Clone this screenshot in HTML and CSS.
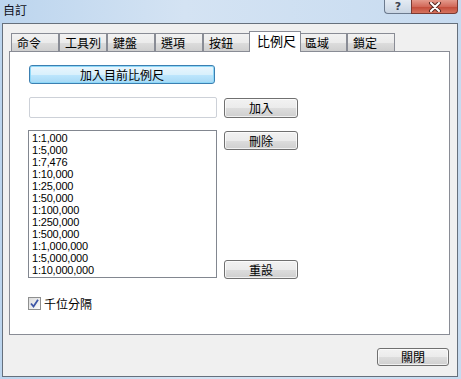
FILE: index.html
```html
<!DOCTYPE html>
<html lang="zh-Hant">
<head>
    <meta charset="UTF-8">
    <title>自訂</title>
    <link rel="stylesheet" href="styles.css">
</head>
<body>
    <div class="window">
        <div class="titlebar">
            <span class="title">自訂</span>
            <div class="caption-buttons">
                <span class="cap help">?</span>
                <span class="cap close">
                    <svg width="14" height="10" viewBox="0 0 14 10">
                        <path d="M3 1 L11 9 M11 1 L3 9" stroke="#5a2a24" stroke-width="4" stroke-linecap="round"/>
                        <path d="M3 1 L11 9 M11 1 L3 9" stroke="#ffffff" stroke-width="2" stroke-linecap="round"/>
                    </svg>
                </span>
            </div>
        </div>

        <div class="client">
            <div class="tabs">
                <span class="tab">命令</span>
                <span class="tab">工具列</span>
                <span class="tab">鍵盤</span>
                <span class="tab">選項</span>
                <span class="tab">按鈕</span>
                <span class="tab active">比例尺</span>
                <span class="tab">區域</span>
                <span class="tab">鎖定</span>
            </div>

            <div class="panel">
                <button class="btn btn-default btn-wide">加入目前比例尺</button>

                <div class="input-row">
                    <input type="text" class="text-input">
                    <button class="btn btn-side btn-add">加入</button>
                </div>

                <div class="list-row">
                    <div class="listbox">
                        <div>1:1,000</div>
                        <div>1:5,000</div>
                        <div>1:7,476</div>
                        <div>1:10,000</div>
                        <div>1:25,000</div>
                        <div>1:50,000</div>
                        <div>1:100,000</div>
                        <div>1:250,000</div>
                        <div>1:500,000</div>
                        <div>1:1,000,000</div>
                        <div>1:5,000,000</div>
                        <div>1:10,000,000</div>
                    </div>
                    <div class="list-buttons">
                        <button class="btn btn-side">刪除</button>
                        <button class="btn btn-side btn-reset">重設</button>
                    </div>
                </div>

                <label class="check">
                    <span class="check-box">
                        <svg width="9" height="9" viewBox="0 0 9 9">
                            <path d="M1 4.5 L3.5 7.5 L8 0.8" fill="none" stroke="#3d56a6" stroke-width="1.8"/>
                        </svg>
                    </span>
                    千位分隔
                </label>
            </div>

            <div class="footer">
                <button class="btn btn-close">關閉</button>
            </div>
        </div>
    </div>
</body>
</html>
```

FILE: styles.css
```css
body {
    margin: 0;
    font-family: "Noto Sans CJK TC", "Liberation Sans", sans-serif;
    font-size: 12px;
    color: #000;
}
.window {
    width: 461px;
    height: 379px;
    box-sizing: border-box;
    padding: 0 3px 2px 2px;
    background: linear-gradient(to right, #bcd5ee, #d4e3f3 40%, #c7dbf0);
}
.titlebar {
    height: 23px;
    display: flex;
    justify-content: space-between;
    align-items: flex-start;
}
.title {
    margin: 3px 0 0 1px;
    font-size: 12px;
    line-height: 14px;
    color: #101020;
}
.caption-buttons {
    display: flex;
    margin-right: 0;
}
.cap {
    height: 14px;
    box-sizing: border-box;
    display: flex;
    align-items: center;
    justify-content: center;
    border: 1px solid #6b7a8e;
    border-top: none;
}
.help {
    width: 27px;
    border-right: none;
    border-radius: 0 0 0 4px;
    background: linear-gradient(#e4ebf3, #c9d5e3);
    color: #3c4250;
    font-family: "DejaVu Sans", sans-serif;
    font-size: 11px;
    font-weight: bold;
    line-height: 12px;
}
.close {
    width: 47px;
    border-color: #7a3a32;
    border-radius: 0 0 4px 0;
    background: linear-gradient(#e49a8c, #d26a5a 50%, #c24a38 51%, #d5725e);
}
.client {
    height: 354px;
    box-sizing: border-box;
    border: 1px solid #66707c;
    background: #f0f0f0;
    display: flex;
    flex-direction: column;
}
.tabs {
    display: flex;
    align-items: flex-end;
    height: 20px;
    margin: 7px 0 0 8px;
    position: relative;
    z-index: 1;
}
.tab {
    width: 48px;
    height: 18px;
    box-sizing: border-box;
    border: 1px solid #898c95;
    border-bottom: none;
    padding: 1px 0 0 5px;
    line-height: 15px;
    background: linear-gradient(#f2f2f2, #ebebeb 50%, #dddddd 51%, #cfcfcf);
}
.tab + .tab {
    margin-left: 0;
}
.tab.active {
    width: 52px;
    height: 21px;
    margin: 0 -2px -1px -2px;
    padding: 0 0 0 7px;
    background: #fff;
    position: relative;
    z-index: 2;
    font-size: 13px;
    line-height: 17px;
}
.panel {
    margin: 0 7px 0 6px;
    height: 284px;
    box-sizing: border-box;
    border: 1px solid #898c95;
    background: #fff;
    padding: 13px 0 0 18px;
    display: flex;
    flex-direction: column;
    align-items: flex-start;
}
.btn {
    font-family: "Noto Sans CJK TC", "Liberation Sans", sans-serif;
    font-size: 12px;
    line-height: 14px;
    padding: 0;
    color: #000;
    border: 1px solid #707070;
    border-radius: 3px;
    background: linear-gradient(#f2f2f2, #ebebeb 50%, #dddddd 51%, #cfcfcf);
    box-shadow: inset 0 0 0 1px rgba(255,255,255,0.7);
}
.btn-default {
    border-color: #3c7fb1;
    background: linear-gradient(#eaf6fd, #d9f0fc 50%, #bee6fd 51%, #a7d9f5);
    box-shadow: inset 0 0 0 1px #8ed8f8;
}
.btn-wide {
    width: 186px;
    height: 19px;
    margin-left: 1px;
}
.input-row {
    display: flex;
    align-items: flex-start;
    margin-top: 13px;
}
.text-input {
    width: 188px;
    height: 21px;
    box-sizing: border-box;
    margin: 0 0 0 1px;
    border: 1px solid #cdd1d8;
    border-radius: 2px;
    background: #fff;
    outline: none;
}
.btn-side {
    width: 74px;
    height: 19px;
}
.btn-add {
    height: 20px;
    margin: 1px 0 0 7px;
}
.list-row {
    display: flex;
    margin-top: 12px;
}
.listbox {
    width: 189px;
    height: 148px;
    box-sizing: border-box;
    border: 1px solid #828790;
    padding: 1px 0 0 3px;
    font-family: "Liberation Sans", sans-serif;
    font-size: 11px;
    line-height: 12px;
    letter-spacing: -0.2px;
}
.list-buttons {
    display: flex;
    flex-direction: column;
    justify-content: space-between;
    margin: 1px 0 -1px 7px;
}
.check {
    display: flex;
    align-items: center;
    margin-top: 19px;
    line-height: 13px;
}
.check-box {
    width: 13px;
    height: 13px;
    box-sizing: border-box;
    border: 1px solid #8e8f8f;
    background: linear-gradient(135deg, #dcdcdc, #fbfbfb);
    display: flex;
    align-items: center;
    justify-content: center;
    margin-right: 3px;
}
.footer {
    display: flex;
    justify-content: flex-end;
    margin: 13px 8px 0 0;
}
.btn-close {
    width: 72px;
    height: 18px;
}
```
